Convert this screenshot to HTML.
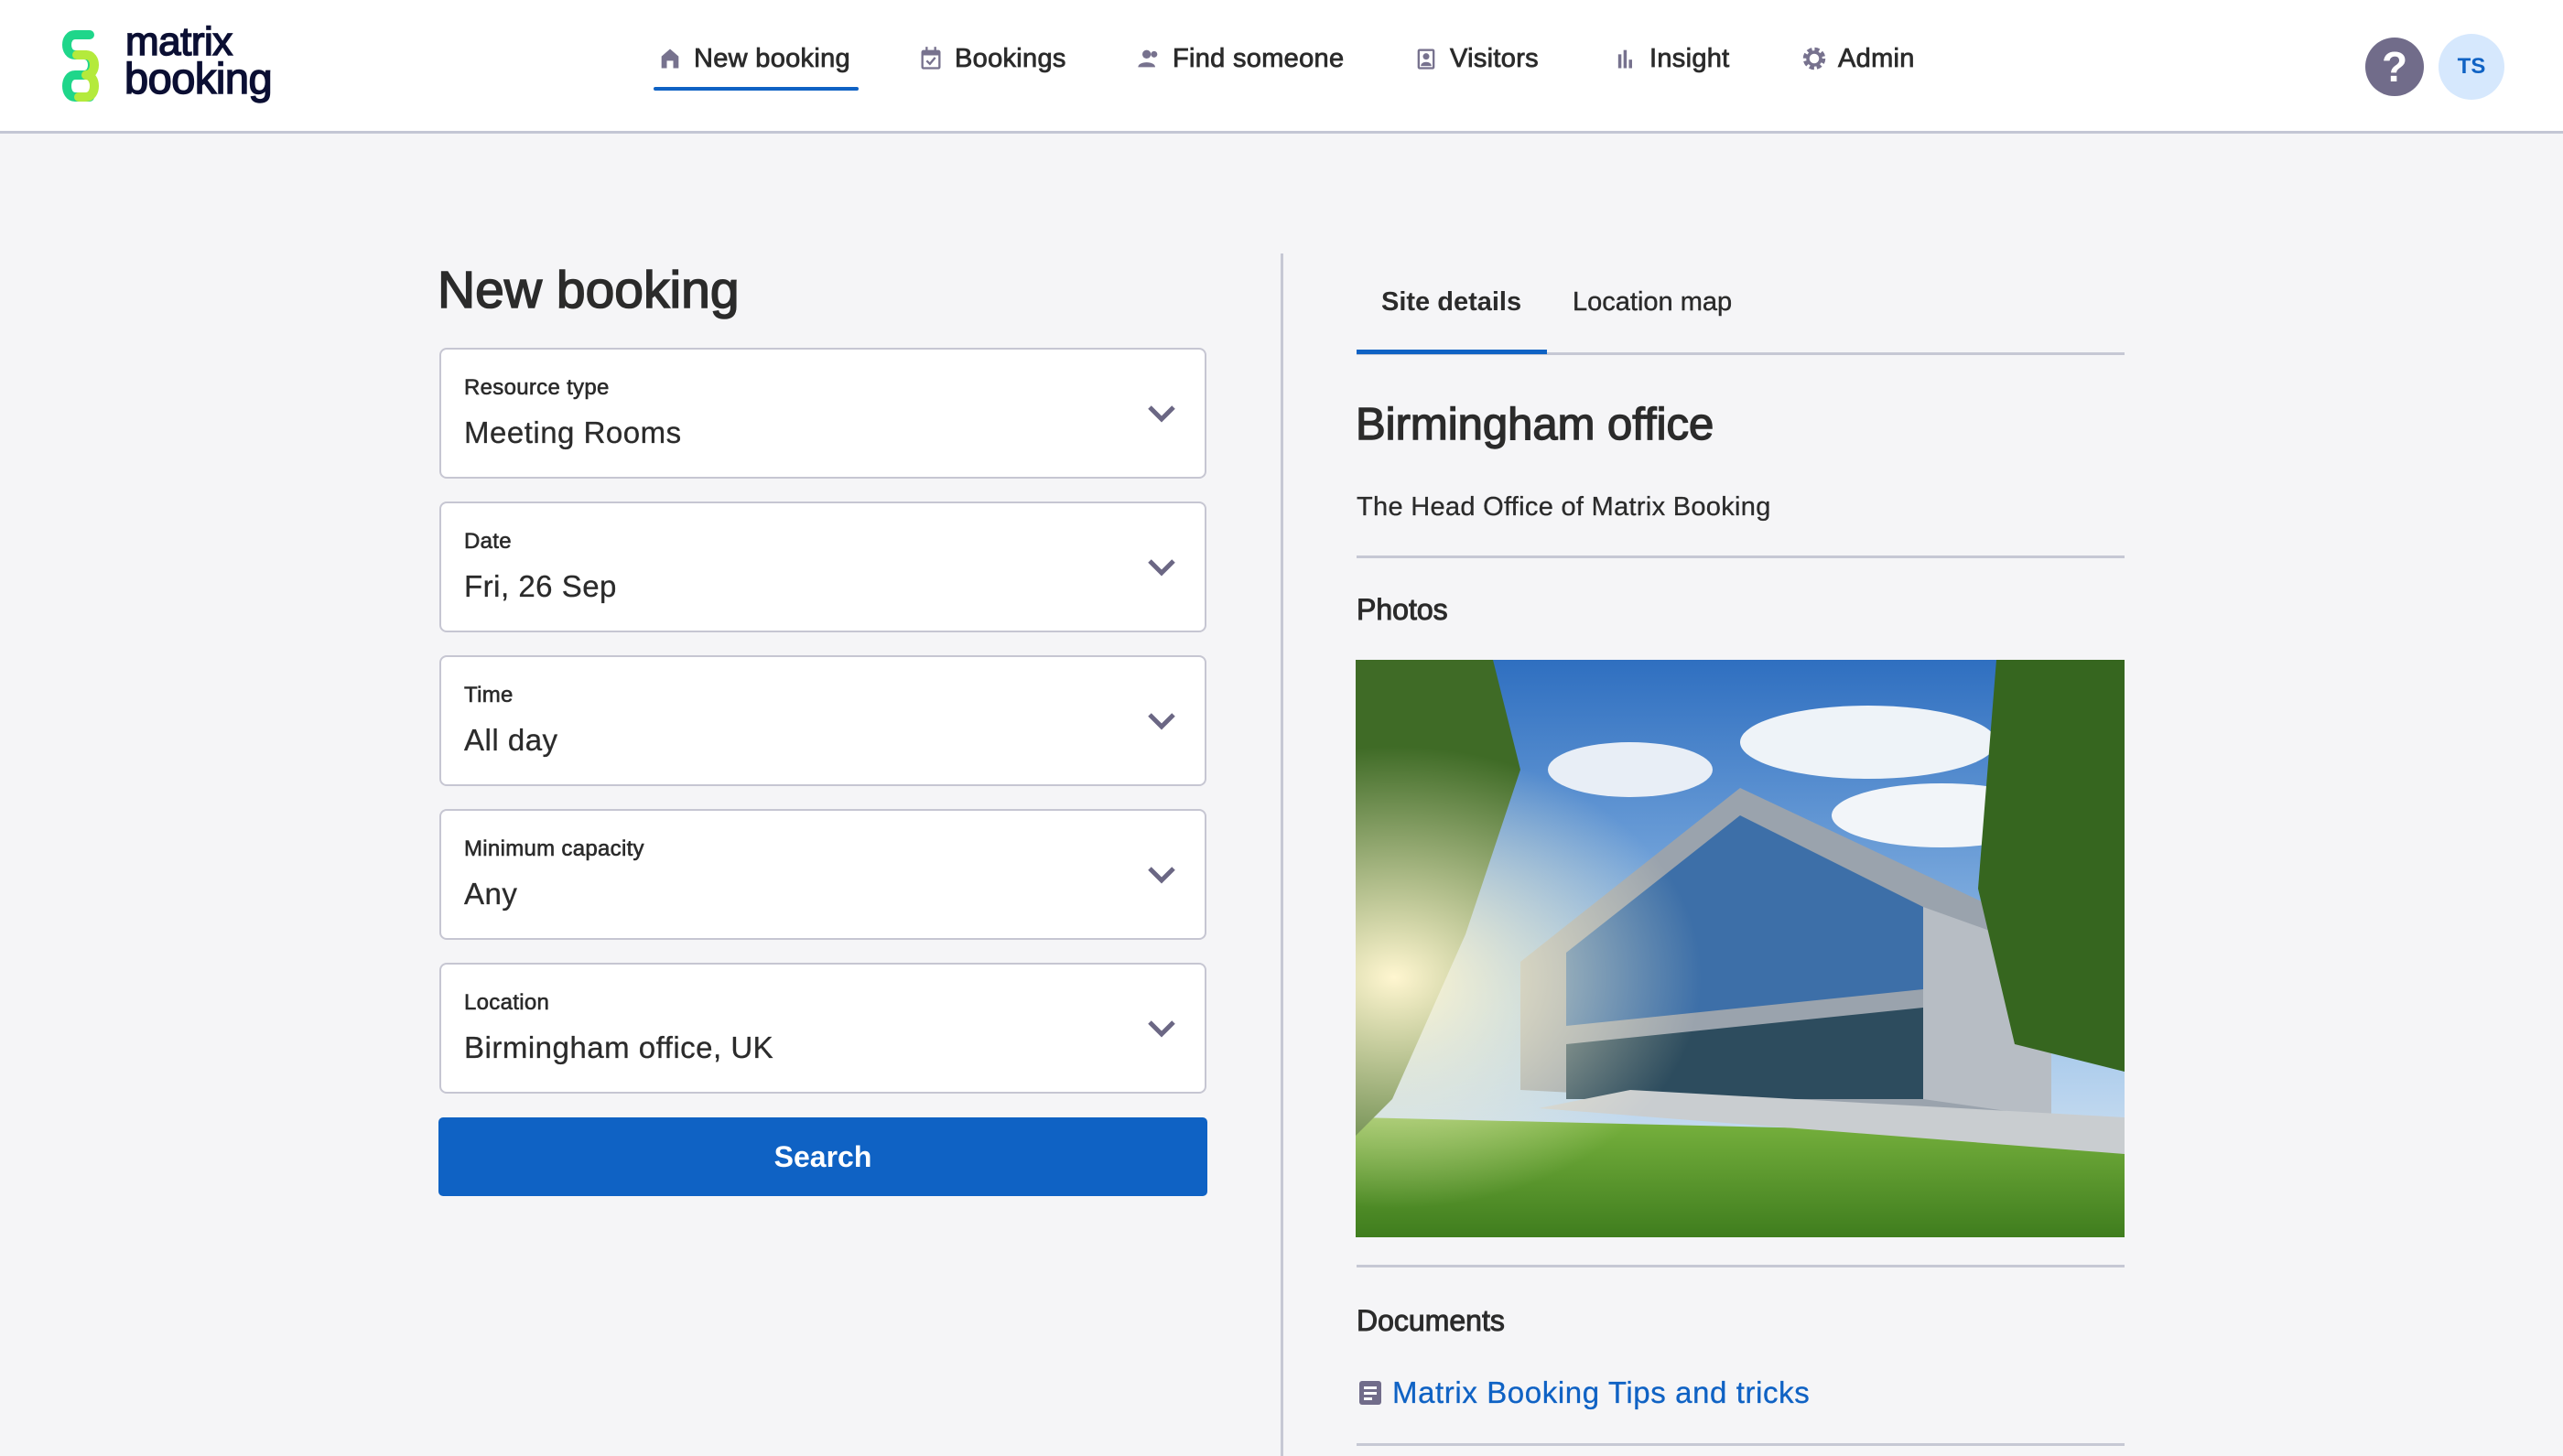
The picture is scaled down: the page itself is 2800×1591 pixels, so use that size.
<!DOCTYPE html>
<html><head><meta charset="utf-8"><style>
*{margin:0;padding:0;box-sizing:border-box}
body{width:2800px;height:1591px;background:#f5f5f7;font-family:"Liberation Sans",sans-serif;color:#2b2b2b;position:relative;overflow:hidden}
.a{position:absolute;white-space:nowrap}
.m{-webkit-text-stroke:0.9px currentColor}
.hdr{position:absolute;left:0;top:0;width:2800px;height:146px;background:#fff;border-bottom:3px solid #c3c6d4}
.nav{position:absolute;top:46px;font-size:29px;color:#2b2b2b;line-height:36px;display:flex;align-items:center;gap:12px;letter-spacing:0.3px;-webkit-text-stroke:0.8px #2b2b2b}
.nav svg{width:28px;height:28px}
.fld{position:absolute;left:480px;width:838px;height:143px;background:#fff;border:2px solid #c6c6d2;border-radius:8px}
.fld .l{position:absolute;left:25px;top:28px;font-size:24px;color:#2b2b2b;letter-spacing:.3px;-webkit-text-stroke:0.6px #2b2b2b}
.fld .v{position:absolute;left:25px;top:72px;font-size:33px;color:#2b2b2b;letter-spacing:.5px;-webkit-text-stroke:0.3px #2b2b2b}
.fld svg{position:absolute;right:30px;top:58px;width:34px;height:24px}
.hr{position:absolute;left:1482px;width:839px;height:3px;background:#c6c8d4}
</style></head><body>
<div class="hdr"></div>
<svg class="a" style="left:62px;top:32px" width="62" height="82" viewBox="0 0 62 82">
<path d="M36 6 H20 C8 6 8 28 20 28 H30 C42 28 42 50 30 50 H20 C8 50 8 74 20 74 H36" fill="none" stroke="#1fd68a" stroke-width="10" stroke-linecap="round"/>
<path d="M22 28 H32 C44 28 44 50 32 50 M32 50 C44 50 44 74 32 74 H24" fill="none" stroke="#b4ea3c" stroke-width="10" stroke-linecap="round"/>
</svg>
<div class="a" style="left:137px;top:24px;font-size:44px;line-height:44px;color:#0b0f33;-webkit-text-stroke:1.5px #0b0f33;letter-spacing:-0.5px">matrix</div>
<div class="a" style="left:136px;top:62px;font-size:47px;line-height:48px;color:#0b0f33;-webkit-text-stroke:1.5px #0b0f33;letter-spacing:-0.5px">booking</div>

<div class="nav" style="left:718px"><svg viewBox="0 0 24 24"><path d="M12 3 L20 10 V21 H15 V14 H9 V21 H4 V10Z" fill="#77728e"/></svg><span>New booking</span></div>
<div class="a" style="left:714px;top:95px;width:224px;height:4px;background:#0f62c4;border-radius:2px"></div>
<div class="nav" style="left:1003px"><svg viewBox="0 0 24 24"><rect x="3" y="4" width="18" height="18" rx="2" fill="#77728e"/><rect x="5" y="9" width="14" height="11" fill="#fff"/><rect x="7" y="1" width="2" height="5" fill="#77728e"/><rect x="15" y="1" width="2" height="5" fill="#77728e"/><path d="M8 14 l3 3 5-6" stroke="#77728e" stroke-width="2" fill="none"/></svg><span>Bookings</span></div>
<div class="nav" style="left:1241px"><svg viewBox="0 0 24 24"><circle cx="10" cy="8" r="4" fill="#77728e"/><path d="M2 20 C2 14 18 14 18 20Z" fill="#77728e"/><circle cx="17" cy="8" r="3" fill="#77728e"/></svg><span>Find someone</span></div>
<div class="nav" style="left:1544px"><svg viewBox="0 0 24 24"><rect x="4" y="3" width="16" height="19" rx="2" fill="#77728e"/><rect x="6" y="5" width="12" height="15" fill="#fff"/><circle cx="12" cy="10" r="3" fill="#77728e"/><path d="M7 19 C7 14 17 14 17 19Z" fill="#77728e"/></svg><span>Visitors</span></div>
<div class="nav" style="left:1762px"><svg viewBox="0 0 24 24"><rect x="5" y="8" width="3" height="13" fill="#77728e"/><rect x="10" y="4" width="3" height="17" fill="#77728e"/><rect x="15" y="13" width="3" height="8" fill="#77728e"/></svg><span>Insight</span></div>
<div class="nav" style="left:1968px"><svg viewBox="0 0 24 24"><circle cx="12" cy="12" r="8" fill="none" stroke="#77728e" stroke-width="5" stroke-dasharray="4 2.3"/><circle cx="12" cy="12" r="6" fill="none" stroke="#77728e" stroke-width="3"/></svg><span>Admin</span></div>

<div class="a" style="left:2584px;top:41px;width:64px;height:64px;border-radius:50%;background:#716c8a;color:#fff;font-size:46px;font-weight:bold;text-align:center;line-height:64px">?</div>
<div class="a" style="left:2664px;top:37px;width:72px;height:72px;border-radius:50%;background:#d6e8fd;color:#0f62c4;font-size:24px;font-weight:bold;text-align:center;line-height:72px">TS</div>

<div class="a m" style="left:478px;top:284px;font-size:57px;color:#2b2b2b;-webkit-text-stroke:1.6px #2b2b2b">New booking</div>

<div class="fld" style="top:380px"><div class="l">Resource type</div><div class="v">Meeting Rooms</div><svg viewBox="0 0 34 24"><path d="M4 5 L17 18 L30 5" stroke="#6b6784" stroke-width="5" fill="none"/></svg></div>
<div class="fld" style="top:548px"><div class="l">Date</div><div class="v">Fri, 26 Sep</div><svg viewBox="0 0 34 24"><path d="M4 5 L17 18 L30 5" stroke="#6b6784" stroke-width="5" fill="none"/></svg></div>
<div class="fld" style="top:716px"><div class="l">Time</div><div class="v">All day</div><svg viewBox="0 0 34 24"><path d="M4 5 L17 18 L30 5" stroke="#6b6784" stroke-width="5" fill="none"/></svg></div>
<div class="fld" style="top:884px"><div class="l">Minimum capacity</div><div class="v">Any</div><svg viewBox="0 0 34 24"><path d="M4 5 L17 18 L30 5" stroke="#6b6784" stroke-width="5" fill="none"/></svg></div>
<div class="fld" style="top:1052px"><div class="l">Location</div><div class="v">Birmingham office, UK</div><svg viewBox="0 0 34 24"><path d="M4 5 L17 18 L30 5" stroke="#6b6784" stroke-width="5" fill="none"/></svg></div>
<div class="a" style="left:479px;top:1221px;width:840px;height:86px;background:#0f62c4;border-radius:5px;color:#fff;font-size:32px;font-weight:bold;text-align:center;line-height:86px">Search</div>

<div class="a" style="left:1399px;top:277px;width:3px;height:1314px;background:#c6c8d4"></div>

<div class="a" style="left:1509px;top:314px;font-size:29px;font-weight:bold;color:#2b2b2b">Site details</div>
<div class="a" style="left:1718px;top:314px;font-size:29px;color:#2b2b2b;-webkit-text-stroke:0.4px #2b2b2b">Location map</div>
<div class="hr" style="top:385px"></div>
<div class="a" style="left:1482px;top:382px;width:208px;height:5px;background:#0f62c4"></div>
<div class="a" style="left:1481px;top:436px;font-size:49px;-webkit-text-stroke:1.4px #2b2b2b">Birmingham office</div>
<div class="a" style="left:1482px;top:538px;font-size:29px;letter-spacing:.3px;-webkit-text-stroke:0.3px #2b2b2b">The Head Office of Matrix Booking</div>
<div class="hr" style="top:607px"></div>
<div class="a" style="left:1482px;top:648px;font-size:32px;-webkit-text-stroke:1px #2b2b2b">Photos</div>

<svg class="a" style="left:1481px;top:721px" width="840" height="631" viewBox="0 0 840 631">
<defs><linearGradient id="s" x1="0" y1="0" x2="0" y2="1"><stop offset="0" stop-color="#2f6fc0"/><stop offset=".6" stop-color="#9cc3ea"/><stop offset="1" stop-color="#e6eef4"/></linearGradient>
<linearGradient id="g" x1="0" y1="0" x2="0" y2="1"><stop offset="0" stop-color="#78b23e"/><stop offset="1" stop-color="#3f7d1e"/></linearGradient>
<radialGradient id="sun" cx=".05" cy=".55" r=".4"><stop offset="0" stop-color="#fff6d0"/><stop offset="1" stop-color="#fff6d0" stop-opacity="0"/></radialGradient></defs>
<rect width="840" height="631" fill="url(#s)"/>
<ellipse cx="560" cy="90" rx="140" ry="40" fill="#eef3f8"/><ellipse cx="640" cy="170" rx="120" ry="35" fill="#f2f5f9"/><ellipse cx="300" cy="120" rx="90" ry="30" fill="#e8eef6"/>
<path d="M180 330 L420 140 L760 300 L760 500 L180 470Z" fill="#9aa3ad"/>
<path d="M230 320 L420 170 L620 270 L620 360 L230 400Z" fill="#3d6fa8"/>
<path d="M230 420 L620 380 L620 480 L230 480Z" fill="#2d4c5e"/>
<path d="M620 270 L760 320 L760 500 L620 480Z" fill="#b7bdc4"/>
<path d="M0 500 L840 520 L840 631 L0 631Z" fill="url(#g)"/>
<path d="M300 470 L840 500 L840 540 L200 490Z" fill="#c9cdd0"/>
<path d="M0 0 L150 0 L180 120 L120 300 L40 480 L0 520Z" fill="#3f6b26"/>
<path d="M700 0 L840 0 L840 450 L720 420 L680 250Z" fill="#36661f"/>
<rect width="840" height="631" fill="url(#sun)"/>
</svg>

<div class="hr" style="top:1382px"></div>
<div class="a" style="left:1482px;top:1425px;font-size:32px;-webkit-text-stroke:1px #2b2b2b">Documents</div>
<svg class="a" style="left:1485px;top:1509px" width="24" height="26" viewBox="0 0 24 26"><rect width="24" height="26" rx="3" fill="#716c8a"/><rect x="5" y="6" width="14" height="3" fill="#fff"/><rect x="5" y="12" width="14" height="3" fill="#fff"/><rect x="5" y="18" width="9" height="3" fill="#fff"/></svg>
<div class="a" style="left:1521px;top:1503px;font-size:33px;color:#0f62c4;letter-spacing:.6px;-webkit-text-stroke:0.3px #0f62c4">Matrix Booking Tips and tricks</div>
<div class="hr" style="top:1577px"></div>
</body></html>
